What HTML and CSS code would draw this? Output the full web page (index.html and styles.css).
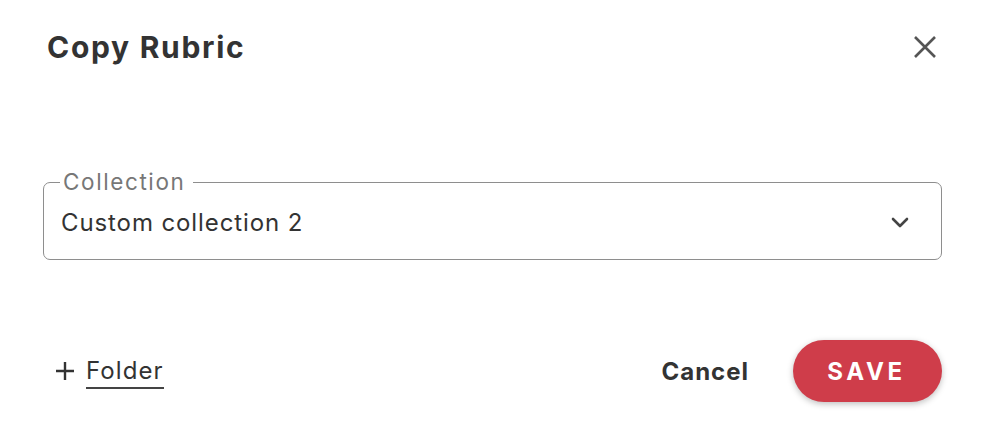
FILE: index.html
```html
<!DOCTYPE html>
<html lang="en">
<head>
<meta charset="utf-8">
<title>Copy Rubric</title>
<link rel="stylesheet" href="styles.css">
</head>
<body>
<div class="dialog">
  <header class="dialog-header">
    <h1 class="dialog-title">Copy Rubric</h1>
    <button class="close-btn" aria-label="Close">
      <svg viewBox="0 0 24 24" width="24" height="24"><path d="M2 2 L22 22 M22 2 L2 22" stroke="#555" stroke-width="2.6" stroke-linecap="butt" fill="none"/></svg>
    </button>
  </header>
  <div class="dialog-body">
    <fieldset class="select-field">
      <legend class="select-label">Collection</legend>
      <div class="select-row">
        <span class="select-value">Custom collection 2</span>
        <svg class="chevron" viewBox="0 0 18 12" width="18" height="12"><path d="M2 2 L9 9 L16 2" stroke="#444" stroke-width="2.6" fill="none" stroke-linecap="round" stroke-linejoin="round"/></svg>
      </div>
    </fieldset>
  </div>
  <footer class="dialog-footer">
    <button class="folder-btn">
      <svg class="plus" viewBox="0 0 20 20" width="20" height="20"><path d="M10 1 V19 M1 10 H19" stroke="#333" stroke-width="2.4" fill="none"/></svg>
      <span class="folder-text">Folder</span>
    </button>
    <div class="actions">
      <button class="cancel-btn">Cancel</button>
      <button class="save-btn">SAVE</button>
    </div>
  </footer>
</div>
</body>
</html>
```
FILE: styles.css
```css
* { box-sizing: border-box; }
html, body { margin: 0; padding: 0; background: #fff; }
body { font-family: "Inter", "Liberation Sans", sans-serif; color: #333; }
.dialog {
  width: 988px;
  height: 432px;
  padding: 28px 46px 0 43px;
  display: flex;
  flex-direction: column;
}
.dialog-header {
  display: flex;
  align-items: center;
  justify-content: space-between;
  padding-left: 4px;
  height: 38px;
}
.dialog-title {
  margin: 0;
  font-size: 30px;
  font-weight: 700;
  color: #333;
  letter-spacing: 1.7px;
}
.close-btn {
  border: 0;
  background: none;
  padding: 0;
  width: 24px;
  height: 24px;
  margin-right: 5px;
  display: flex;
}
.dialog-body { padding-top: 105px; }
.select-field {
  margin: 0;
  border: 1.5px solid #8e8e8e;
  border-radius: 7px;
  padding: 0 16px 0 17px;
  min-width: 0;
}
.select-label {
  font-size: 22.5px;
  color: #777;
  padding: 0 8px 0 3px;
  margin-left: -1px;
  line-height: 22px;
  letter-spacing: 1.6px;
}
.select-row {
  display: flex;
  align-items: center;
  justify-content: space-between;
  height: 73px;
  margin-top: -7px;
}
.select-value { font-size: 24px; color: #333; letter-spacing: 0.9px; }
.chevron { margin-right: 16px; }
.dialog-footer {
  margin-top: auto;
  margin-bottom: 30px;
  display: flex;
  align-items: center;
  justify-content: space-between;
}
.folder-btn {
  border: 0;
  background: none;
  padding: 0 0 0 12px;
  display: flex;
  align-items: center;
  font-family: inherit;
  color: #333;
  font-size: 24px;
}
.plus { margin-right: 11px; }
.folder-text {
  border-bottom: 2px solid #444;
  line-height: 32px;
  letter-spacing: 1.1px;
  margin-top: 2px;
}
.actions { display: flex; align-items: center; gap: 44px; }
.cancel-btn {
  border: 0; background: none; padding: 0;
  font-family: inherit; font-weight: 700; font-size: 24px; color: #333;
  letter-spacing: 1px;
}
.save-btn {
  border: 0;
  background: #cf3d4a;
  color: #fff;
  font-family: inherit;
  font-weight: 700;
  font-size: 24px;
  letter-spacing: 3.6px;
  width: 149px;
  height: 62px;
  border-radius: 31px;
  box-shadow: 0 2px 6px rgba(0,0,0,0.25);
  padding-left: 4px;
}
```
